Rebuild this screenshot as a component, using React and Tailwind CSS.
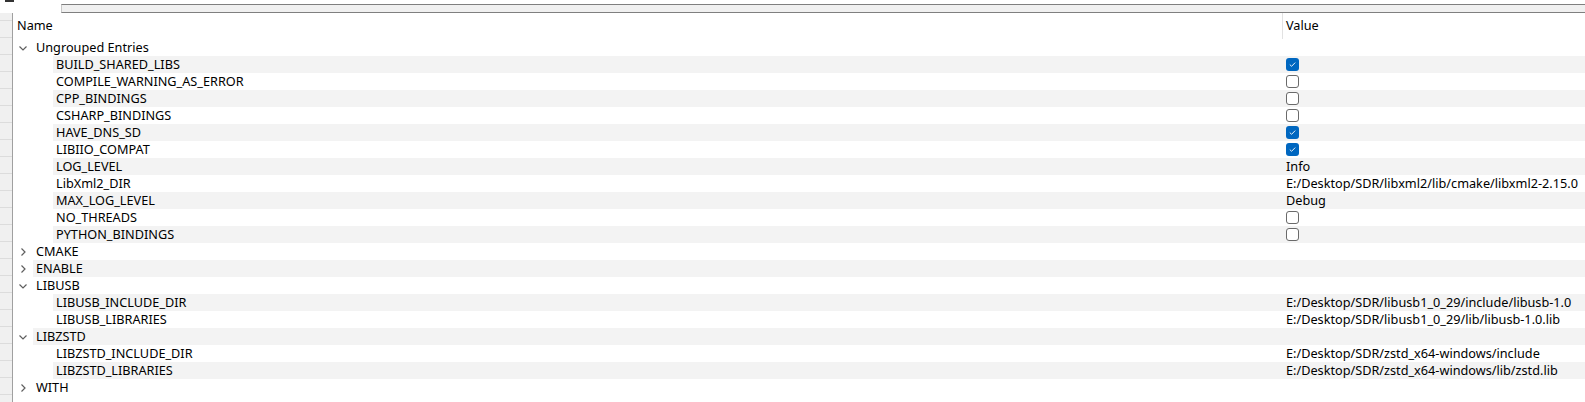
import { Fragment } from "react";

const groups = [
    {
        name: "Ungrouped Entries",
        open: true,
        items: [
            { name: "BUILD_SHARED_LIBS", check: true },
            { name: "COMPILE_WARNING_AS_ERROR", check: false },
            { name: "CPP_BINDINGS", check: false },
            { name: "CSHARP_BINDINGS", check: false },
            { name: "HAVE_DNS_SD", check: true },
            { name: "LIBIIO_COMPAT", check: true },
            { name: "LOG_LEVEL", value: "Info" },
            { name: "LibXml2_DIR", value: "E:/Desktop/SDR/libxml2/lib/cmake/libxml2-2.15.0" },
            { name: "MAX_LOG_LEVEL", value: "Debug" },
            { name: "NO_THREADS", check: false },
            { name: "PYTHON_BINDINGS", check: false },
        ],
    },
    { name: "CMAKE", open: false, items: [] },
    { name: "ENABLE", open: false, items: [] },
    {
        name: "LIBUSB",
        open: true,
        items: [
            { name: "LIBUSB_INCLUDE_DIR", value: "E:/Desktop/SDR/libusb1_0_29/include/libusb-1.0" },
            { name: "LIBUSB_LIBRARIES", value: "E:/Desktop/SDR/libusb1_0_29/lib/libusb-1.0.lib" },
        ],
    },
    {
        name: "LIBZSTD",
        open: true,
        items: [
            { name: "LIBZSTD_INCLUDE_DIR", value: "E:/Desktop/SDR/zstd_x64-windows/include" },
            { name: "LIBZSTD_LIBRARIES", value: "E:/Desktop/SDR/zstd_x64-windows/lib/zstd.lib" },
        ],
    },
    { name: "WITH", open: false, items: [] },
];

const Chevron = ({ open }) => (
    <svg width="10" height="10" viewBox="0 0 10 10" className="text-[#5f5f5f]">
        {open ? (
            <path d="M1.5 3.5 L5 7 L8.5 3.5" fill="none" stroke="currentColor" strokeWidth="1.2" />
        ) : (
            <path d="M3.5 1.5 L7 5 L3.5 8.5" fill="none" stroke="currentColor" strokeWidth="1.2" />
        )}
    </svg>
);

const CheckBox = ({ checked }) =>
    checked ? (
        <div className="w-[13px] h-[13px] rounded-[3px] bg-[#0067c0] flex items-center justify-center">
            <svg width="9" height="9" viewBox="0 0 9 9">
                <path d="M1.8 4.6 L3.6 6.3 L7.2 2.6" fill="none" stroke="white" strokeWidth="0.9" />
            </svg>
        </div>
    ) : (
        <div className="w-[13px] h-[13px] rounded-[3px] border border-[#6a6a6a] bg-white" />
    );

const Row = ({ depth, stripe, name, open, item }) => {
    const indent = depth === 0 ? "w-[20px]" : "w-[40px]";
    const nameW = depth === 0 ? "w-[1249px]" : "w-[1229px]";
    return (
        <div className="flex h-[17px]">
            <div className={`${indent} shrink-0 flex items-center pl-[5px]`}>
                {depth === 0 && <Chevron open={open} />}
            </div>
            <div className={`flex flex-1 min-w-0 items-center ${stripe ? "bg-[#f3f3f3]" : "bg-white"}`}>
                <div className={`${nameW} shrink-0 pl-[3px] whitespace-nowrap overflow-hidden leading-[17px]`}>
                    {name}
                </div>
                <div className="flex-1 min-w-0 pl-[4px] leading-[17px] flex items-center whitespace-nowrap overflow-hidden">
                    {item && item.check !== undefined && <CheckBox checked={item.check} />}
                    {item && item.value}
                </div>
            </div>
        </div>
    );
};

export default function App() {
    const rows = [];
    groups.forEach((g) => {
        rows.push({ depth: 0, name: g.name, open: g.open });
        if (g.open) g.items.forEach((it) => rows.push({ depth: 1, name: it.name, item: it }));
    });

    return (
        <div
            className="w-[1585px] h-[402px] bg-white overflow-hidden text-[12.7px] text-[#000]"
            style={{ fontFamily: "'Noto Sans', 'Noto Sans CJK SC', sans-serif" }}
        >
            {/* top tab strip */}
            <div className="flex h-[13px]">
                <div className="w-[61px] shrink-0 bg-white">
                    <div className="ml-[5px] w-[9px] h-[2px] bg-[#333]" />
                </div>
                <div className="flex-1 mt-[4px] h-[9px] bg-[#f0f0f0] border-t border-b border-[#7f7f7f] border-l border-l-[#c8c8c8]" />
            </div>

            <div className="flex h-[389px]">
                {/* partly hidden side panel */}
                <div className="w-[12px] shrink-0 bg-[#f0f0f0] flex flex-col">
                    <div className="h-[8px] border-b border-[#dcdcdc]" />
                    {Array.from({ length: 22 }).map((_, i) => (
                        <div key={i} className="h-[17px] shrink-0 border-b border-[#dcdcdc]" />
                    ))}
                </div>

                <div className="flex-1 min-w-0 border-l border-[#a0a0a0] flex flex-col">
                    {/* header */}
                    <div className="flex h-[26px] shrink-0">
                        <div className="w-[1269px] shrink-0 pl-[4px] flex items-center">Name</div>
                        <div className="flex-1 border-l border-[#e2e2e2] pl-[3px] flex items-center">Value</div>
                    </div>
                    {rows.map((r, i) => (
                        <Fragment key={i}>
                            <Row depth={r.depth} stripe={i % 2 === 1} name={r.name} open={r.open} item={r.item} />
                        </Fragment>
                    ))}
                </div>
            </div>
        </div>
    );
}
